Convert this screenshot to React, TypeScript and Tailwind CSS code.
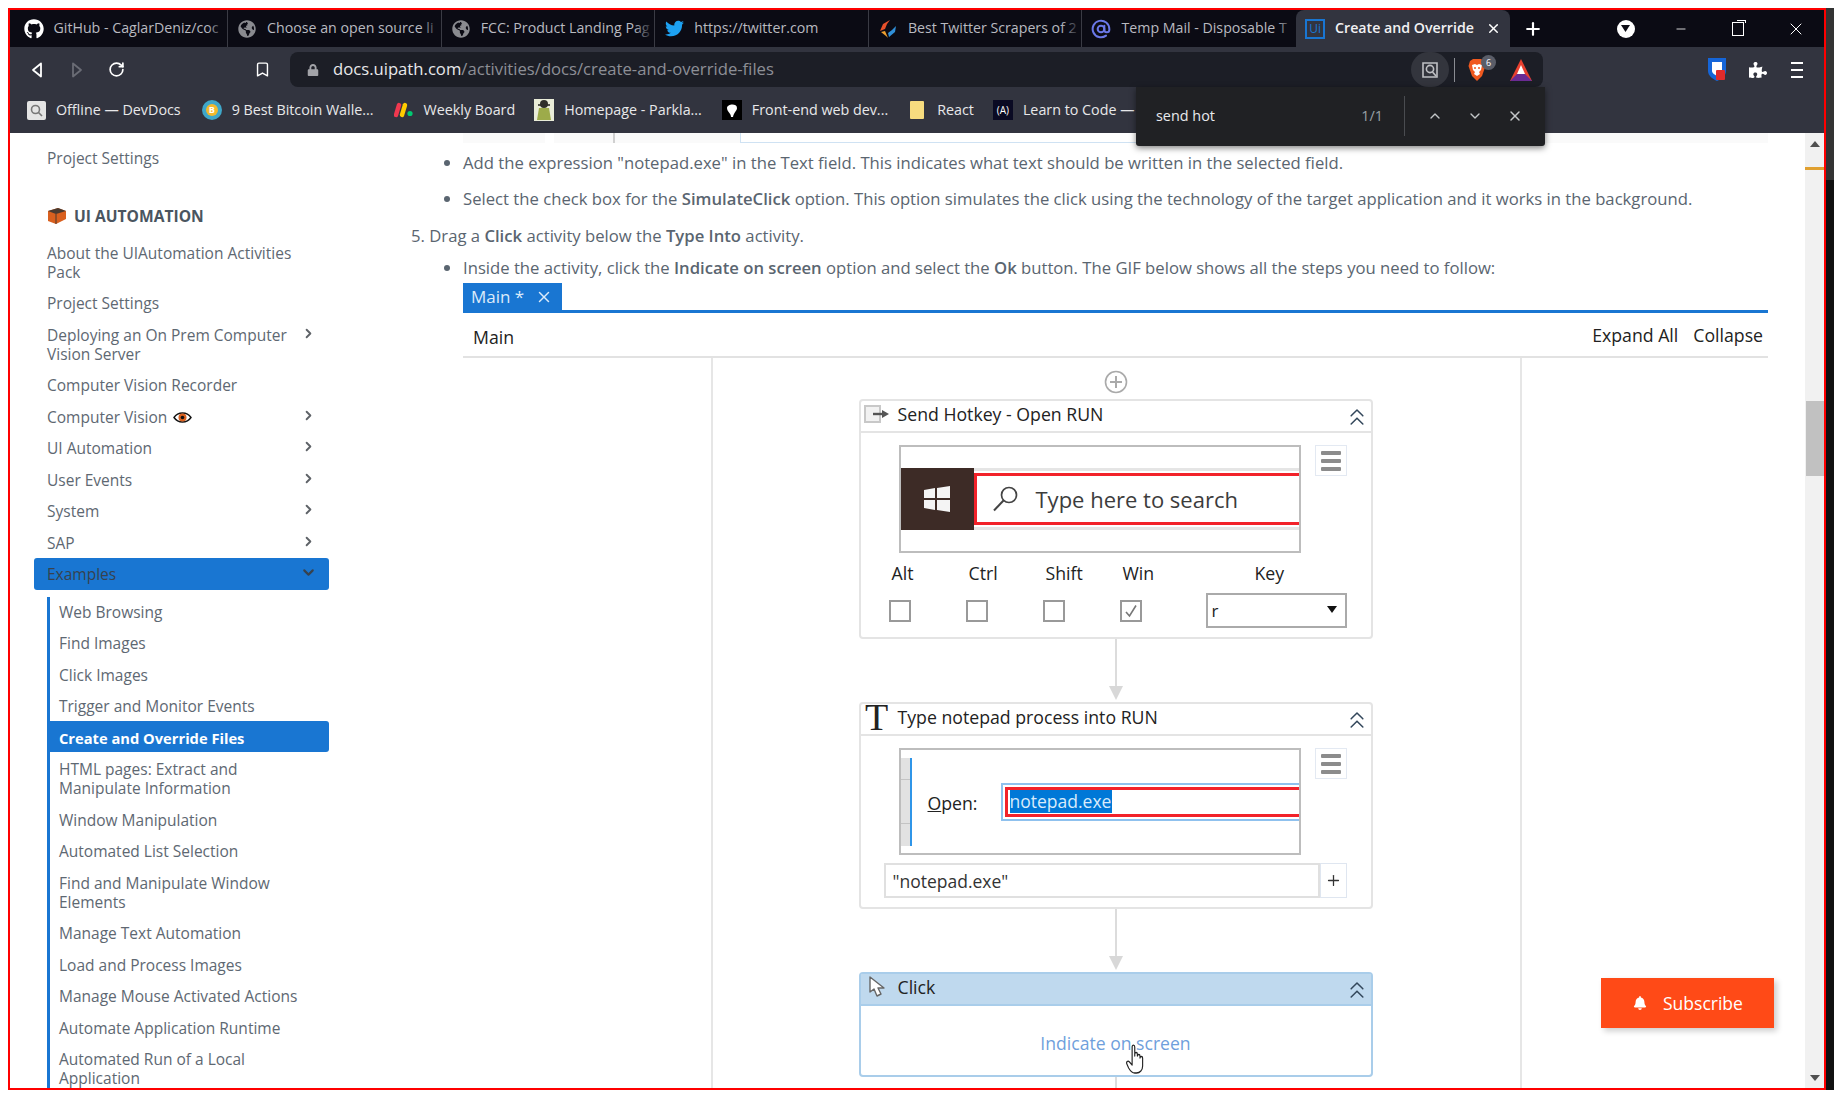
import React from 'react';
import { FaGithub, FaTwitter, FaGlobeAmericas, FaPuzzlePiece, FaLock, FaBell } from 'react-icons/fa';
import { AtSign, Bookmark, RotateCw, ChevronRight, ChevronDown, ChevronUp, ChevronsUp, X, Plus, Minus } from 'lucide-react';

const uiFont = "font-['Open_Sans',sans-serif]";

const Tab = ({ icon, title, last }: { icon: React.ReactNode; title: string; last?: boolean }) => (
  <div className={`w-[213.6px] h-full flex items-center relative ${last ? '' : 'border-r border-[#3a3b44]'}`}>
    <div className="w-[20px] h-[20px] ml-[9px] flex items-center justify-center shrink-0">{icon}</div>
    <span className="ml-[10px] pb-[2px] w-[170px] overflow-hidden whitespace-nowrap text-[14.2px] text-[#b9bac0]">{title}</span>
    <div className="absolute right-0 top-0 bottom-0 w-[20px] bg-gradient-to-r from-transparent to-[#0b0b14]" />
  </div>
);

const Mark = ({ icon, label, gap }: { icon: React.ReactNode; label: string; gap: string }) => (
  <div className={`flex items-center shrink-0 ${gap}`}>
    <div className="w-[20px] h-[20px] flex items-center justify-center shrink-0">{icon}</div>
    <span className="ml-[10px] text-[14.3px] text-[#e8e8ea] whitespace-nowrap">{label}</span>
  </div>
);

const SideItem = ({ label, arrow, extra }: { label: string; arrow?: boolean; extra?: React.ReactNode }) => (
  <div className="flex items-start justify-between px-[13px] py-[6.25px] leading-[19px]">
    <span className="w-[245px] flex items-center gap-[5px]">{label}{extra}</span>
    {arrow && <ChevronRight size={15} strokeWidth={3} className="text-[#5f6368] shrink-0" />}
  </div>
);

const SubItem = ({ label }: { label: string }) => (
  <div className="px-[9px] py-[6.25px] leading-[19px] w-[262px]">{label}</div>
);

const Connector = ({ h }: { h: string }) => (
  <div className={`flex flex-col items-center pb-[2px] ${h}`}>
    <div className="w-[2px] flex-1 bg-[#dcdcdc]" />
    <svg width="14" height="14" viewBox="0 0 14 14" className="shrink-0"><polygon points="0,0 14,0 7,14" fill="#d8d8d8" /></svg>
  </div>
);

const MenuBtn = () => (
  <div className="w-[32px] h-[31px] border border-[#e3e9f2] flex flex-col justify-center gap-[4px] px-[5px]">
    <div className="h-[4px] bg-[#8c8c8c] rounded-[1px]" />
    <div className="h-[4px] bg-[#8c8c8c] rounded-[1px]" />
    <div className="h-[4px] bg-[#8c8c8c] rounded-[1px]" />
  </div>
);

const CardHead = ({ icon, title, active }: { icon: React.ReactNode; title: string; active?: boolean }) => (
  <div className={`h-[32px] pb-[4px] flex items-center border-b-2 shrink-0 ${active ? 'bg-[#bfd9ee] border-[#a9cdea]' : 'border-[#e4e4e4]'}`}>
    <div className="w-[37px] pr-[5px] flex justify-center shrink-0">{icon}</div>
    <span className="text-[17.7px] text-[#222]">{title}</span>
    <ChevronsUp size={28} strokeWidth={1.3} className="ml-auto mt-[6px] text-[#33475b]" />
  </div>
);

const CheckCol = ({ label, checked }: { label: string; checked?: boolean }) => (
  <div className="w-[77px] flex flex-col">
    <span className="h-[24px] leading-[24px] pl-[3px] text-[17.7px] text-[#222]">{label}</span>
    <div className="mt-[15px] w-[22px] h-[22px] border-2 border-[#999] flex items-center justify-center">
      {checked && (
        <svg width="14" height="14" viewBox="0 0 14 14"><path d="M2 8 L5.5 12 L12 1.5" fill="none" stroke="#777" strokeWidth="1.6" /></svg>
      )}
    </div>
  </div>
);

export default function App() {
  return (
    <div className={`w-[1834px] h-[1098px] bg-white pt-2 pl-2 flex overflow-hidden ${uiFont}`}>
      <div className="w-[1818px] h-[1082px] border-2 border-[#f00] flex flex-col relative overflow-hidden shrink-0">
        {/* tab strip */}
        <div className="h-[37px] bg-[#0b0b14] flex items-stretch pl-[4.5px] shrink-0">
          <Tab icon={<FaGithub size={20} className="text-white" />} title="GitHub - CaglarDeniz/coc" />
          <Tab icon={<FaGlobeAmericas size={18} className="text-[#8a8b90]" />} title="Choose an open source li" />
          <Tab icon={<FaGlobeAmericas size={18} className="text-[#8a8b90]" />} title="FCC: Product Landing Pag" />
          <Tab icon={<FaTwitter size={19} className="text-[#1da1f2]" />} title="https://twitter.com" />
          <Tab
            icon={
              <svg width="20" height="20" viewBox="0 0 20 20">
                <path d="M12 1 L5 5 L2 12 L7 10 L9 5 Z" fill="#e8502a" />
                <path d="M18 7 L17 13 L11 18 L10 14 L14 11 Z" fill="#2f8fd8" />
                <path d="M3 13 L8 17 L10 19 L7 12 Z" fill="#f0a030" />
              </svg>
            }
            title="Best Twitter Scrapers of 2"
          />
          <Tab icon={<AtSign size={20} strokeWidth={2.4} className="text-[#6a78e8]" />} title="Temp Mail - Disposable T" last />
          <div className="w-[213.6px] h-full bg-[#32343f] rounded-t-[8px] flex items-center relative">
            <div className="w-[20px] h-[20px] ml-[9px] border-2 border-[#1976d2] flex items-center justify-center text-[12px] text-[#1976d2] leading-none shrink-0">Ui</div>
            <span className="ml-[10px] pb-[2px] w-[148px] overflow-hidden whitespace-nowrap text-[14.2px] font-semibold text-[#f1f1f3]">Create and Override</span>
            <X size={15} strokeWidth={2.4} className="ml-[3px] text-white" />
          </div>
          <Plus size={20} strokeWidth={2.6} className="text-white self-center ml-[13px]" />
          <div className="w-[18px] h-[18px] rounded-full bg-white self-center ml-[74px] flex items-center justify-center">
            <svg width="9" height="7" viewBox="0 0 9 7"><polygon points="0,0 9,0 4.5,7" fill="#0b0b14" /></svg>
          </div>
          <Minus size={14} strokeWidth={1.4} className="text-white self-center ml-[39px]" />
          <div className="self-center ml-[44px] w-[12px] h-[14px] border border-white relative">
            <div className="absolute -top-[3px] -right-[3px] w-[9px] h-[3px] border-t border-r border-white" />
          </div>
          <X size={20} strokeWidth={1.2} className="text-white self-center ml-[42px]" />
        </div>

        {/* toolbar */}
        <div className="h-[43px] bg-[#32343f] flex items-start shrink-0 relative">
          <div className="flex items-center h-[35px] mt-[5px]">
            <svg width="12" height="16" viewBox="0 0 12 16" className="ml-[21px]"><path d="M10 1.5 L2 8 L10 14.5 Z" fill="none" stroke="#fff" strokeWidth="1.8" strokeLinejoin="round" /></svg>
            <svg width="12" height="16" viewBox="0 0 12 16" className="ml-[28px]"><path d="M2 1.5 L10 8 L2 14.5 Z" fill="none" stroke="#6a6c75" strokeWidth="1.8" strokeLinejoin="round" /></svg>
            <RotateCw size={17} strokeWidth={2.4} className="ml-[25px] text-white" />
            <Bookmark size={17} strokeWidth={2} className="ml-[129px] text-white" />
          </div>
          <div className="ml-[19px] mt-[5px] w-[1253px] h-[35px] bg-[#1c1e26] rounded-[8px] flex items-center">
            <FaLock size={12} className="ml-[17px] text-[#a2a3a8]" />
            <span className="ml-[14px] text-[16.66px] text-[#e8e8ea] whitespace-nowrap">docs.uipath.com<span className="text-[#8d8f96]">/activities/docs/create-and-override-files</span></span>
            <div className="ml-auto w-[38px] h-[35px] rounded-full bg-[#33353d] flex items-center justify-center">
              <svg width="18" height="20" viewBox="0 0 18 20" fill="none" stroke="#bfc0c4" strokeWidth="1.6">
                <path d="M2 3 H16 V17 H2 Z" /><circle cx="9" cy="9" r="3.6" /><path d="M11.5 12 L15 16" />
              </svg>
            </div>
            <div className="w-px h-[24px] bg-[#8a8c92] ml-[5px]" />
            <div className="relative ml-[13px] w-[18px] h-[24px]">
              <svg width="18" height="24" viewBox="0 0 18 24">
                <path d="M2 3 L5 1 H13 L16 3 L17.5 8 L14 18 L9 23 L4 18 L0.5 8 Z" fill="#f0591f" />
                <path d="M4 7 L7 6 L9 7 L11 6 L14 7 L13 12 L11 14 L12 16 L9 18 L6 16 L7 14 L5 12 Z" fill="#fff" />
                <path d="M6 10 H8 M10 10 H12" stroke="#f0591f" strokeWidth="1.4" />
              </svg>
              <div className="absolute -top-[3px] left-[13px] w-[15px] h-[15px] rounded-full bg-[#5a5d68] text-[9px] leading-[15px] text-center text-white">6</div>
            </div>
            <svg width="22" height="22" viewBox="0 0 22 22" className="ml-[24px] mr-[11px]">
              <polygon points="11,0 22,22 0,22" fill="#e8402f" />
              <polygon points="0,22 7,15 15,15 22,22" fill="#6a2b93" />
              <polygon points="11,6 15,15 7,15" fill="#fff" />
            </svg>
          </div>
          <div className="flex items-center h-[35px] mt-[5px]">
            <svg width="20" height="25" viewBox="0 0 20 25" className="ml-[164px]">
              <path d="M1 1 H19 V14 C19 19 14 22 10 24 C6 22 1 19 1 14 Z" fill="#1565d8" />
              <path d="M5 5 H15 V14 C15 16 12 18 10 19 C8 18 5 16 5 14 Z" fill="#fff" />
              <rect x="9" y="13" width="9" height="10" rx="1" fill="#e02b2b" />
            </svg>
            <FaPuzzlePiece size={18} className="ml-[22px] text-white" />
            <div className="ml-[24px] w-[12px] flex flex-col gap-[5px]">
              <div className="h-[2px] bg-white" /><div className="h-[2px] bg-white" /><div className="h-[2px] bg-white" />
            </div>
          </div>
        </div>

        {/* bookmarks */}
        <div className="h-[43px] bg-[#32343f] flex items-center pl-[16px] pb-[3px] shrink-0 overflow-hidden">
          <Mark
            gap=""
            label="Offline — DevDocs"
            icon={
              <div className="w-[19px] h-[19px] bg-[#e4e4e4] rounded-[2px] flex items-center justify-center">
                <svg width="13" height="13" viewBox="0 0 13 13" fill="none" stroke="#777" strokeWidth="1.6"><circle cx="5.5" cy="5.5" r="4" /><path d="M8.5 8.5 L12 12" /></svg>
              </div>
            }
          />
          <Mark
            gap="ml-[21px]"
            label="9 Best Bitcoin Walle..."
            icon={
              <div className="w-[20px] h-[20px] rounded-full bg-[#3fa7c9] flex items-center justify-center">
                <div className="w-[12px] h-[12px] rounded-full bg-[#f2b92c] text-[9px] leading-[12px] text-center text-white font-bold">B</div>
              </div>
            }
          />
          <Mark
            gap="ml-[20px]"
            label="Weekly Board"
            icon={
              <svg width="20" height="16" viewBox="0 0 20 16">
                <path d="M5 3 L2 13" stroke="#f0384f" strokeWidth="4.4" strokeLinecap="round" />
                <path d="M11 3 L8 13" stroke="#ffcb00" strokeWidth="4.4" strokeLinecap="round" />
                <circle cx="16" cy="11.5" r="2.6" fill="#00ca72" />
              </svg>
            }
          />
          <Mark
            gap="ml-[19px]"
            label="Homepage - Parkla..."
            icon={
              <svg width="20" height="22" viewBox="0 0 20 22">
                <rect width="20" height="22" fill="#e9ecd8" />
                <circle cx="10" cy="5" r="4" fill="#2f2f2a" />
                <path d="M5 9 L15 9 L17 21 L3 21 Z" fill="#9dab4a" />
                <path d="M4 6 H16" stroke="#2f2f2a" strokeWidth="1.6" />
              </svg>
            }
          />
          <Mark
            gap="ml-[20px]"
            label="Front-end web dev..."
            icon={
              <div className="w-[20px] h-[20px] bg-black flex items-center justify-center">
                <svg width="12" height="15" viewBox="0 0 12 15"><path d="M1 5 C1 1 11 0 11 5 C11 8 8 9 7 14 L5 14 C5 10 1 9 1 5 Z" fill="#fff" /></svg>
              </div>
            }
          />
          <Mark gap="ml-[19px]" label="React" icon={<div className="w-[14px] h-[18px] bg-[#f7dc7f] rounded-[1px]" />} />
          <Mark
            gap="ml-[19px]"
            label="Learn to Code —"
            icon={<div className="w-[20px] h-[20px] bg-[#0a0a23] text-[10px] leading-[20px] text-center text-white">(A)</div>}
          />
        </div>

        {/* page */}
        <div className="flex-1 flex min-h-0 bg-white">
          <aside className="w-[390px] pl-6 pt-[9.25px] shrink-0 overflow-hidden text-[15.5px] text-[#5e6872]">
            <div className="w-[295px]">
              <SideItem label="Project Settings" />
              <div className="mt-[30.5px] mb-[9.25px] h-[24px] flex items-center pl-[13px] gap-[7px] font-bold text-[15.6px] text-[#4a5560]">
                <svg width="20" height="18" viewBox="0 0 20 18">
                  <path d="M1 4 L11 1 L19 4 L19 12 L9 17 L1 14 Z" fill="#d9601f" />
                  <path d="M1 4 L11 1 L19 4 L9 7 Z" fill="#4a3a30" />
                  <path d="M9 7 V17" stroke="#4a3a30" strokeWidth="1" />
                </svg>
                UI AUTOMATION
              </div>
              <SideItem label="About the UIAutomation Activities Pack" />
              <SideItem label="Project Settings" />
              <SideItem label="Deploying an On Prem Computer Vision Server" arrow />
              <SideItem label="Computer Vision Recorder" />
              <SideItem
                label="Computer Vision"
                arrow
                extra={
                  <svg width="19" height="13" viewBox="0 0 19 13" className="ml-[1px]">
                    <path d="M1 6.5 C5 0.5 14 0.5 18 6.5 C14 12.5 5 12.5 1 6.5 Z" fill="#fff" stroke="#111" strokeWidth="1.4" />
                    <circle cx="9.5" cy="6.5" r="4" fill="#d9601f" />
                    <circle cx="9.5" cy="6.5" r="1.8" fill="#111" />
                  </svg>
                }
              />
              <SideItem label="UI Automation" arrow />
              <SideItem label="User Events" arrow />
              <SideItem label="System" arrow />
              <SideItem label="SAP" arrow />
              <div className="flex items-start justify-between -mt-[1px] mb-[1px] h-[31.5px] px-[13px] pt-[7.25px] leading-[19px] bg-[#1976d2] rounded-[3px] text-[#37424e]">
                <span>Examples</span>
                <ChevronDown size={17} strokeWidth={3} className="text-[#37424e] -mt-[1px] -mr-[1px]" />
              </div>
              <div className="mt-[7px] ml-[13px] border-l-[3px] border-[#1976d2]">
                <SubItem label="Web Browsing" />
                <SubItem label="Find Images" />
                <SubItem label="Click Images" />
                <SubItem label="Trigger and Monitor Events" />
                <div className="-ml-[3px] -mt-[2px] mb-[2px] h-[31.5px] pl-[12px] pt-[8.25px] leading-[19px] bg-[#1976d2] rounded-r-[3px] text-white text-[14.7px] font-bold">Create and Override Files</div>
                <SubItem label="HTML pages: Extract and Manipulate Information" />
                <SubItem label="Window Manipulation" />
                <SubItem label="Automated List Selection" />
                <SubItem label="Find and Manipulate Window Elements" />
                <SubItem label="Manage Text Automation" />
                <SubItem label="Load and Process Images" />
                <SubItem label="Manage Mouse Activated Actions" />
                <SubItem label="Automate Application Runtime" />
                <SubItem label="Automated Run of a Local Application" />
              </div>
            </div>
          </aside>

          <main className="flex-1 min-w-0 overflow-hidden text-[16.68px] leading-[24px] text-[#5a6570]">
            {/* bottom edge of the previous gif */}
            <div className="h-[10px] ml-[63px] w-[1305px] flex">
              <div className="w-[82px] bg-[#fafafa]" />
              <div className="w-[59px] ml-[9px] bg-[#fafafa]" />
              <div className="w-[2px] bg-[#d0d0d0]" />
              <div className="w-[125px] bg-[#fafafa]" />
              <div className="w-[400px] border-l border-b border-[#cfe2f3]" />
              <div className="flex-1 bg-[#fafafa]" />
            </div>
            <ul className="list-disc ml-[63px] mt-[8px]">
              <li>Add the expression "notepad.exe" in the Text field. This indicates what text should be written in the selected field.</li>
              <li className="mt-[12px]">Select the check box for the <b className="font-semibold">SimulateClick</b> option. This option simulates the click using the technology of the target application and it works in the background.</li>
            </ul>
            <p className="ml-[11px] mt-[13px]">5. Drag a <b className="font-semibold">Click</b> activity below the <b className="font-semibold">Type Into</b> activity.</p>
            <ul className="list-disc ml-[63px] mt-[8px]">
              <li>Inside the activity, click the <b className="font-semibold">Indicate on screen</b> option and select the <b className="font-semibold">Ok</b> button. The GIF below shows all the steps you need to follow:</li>
            </ul>

            {/* gif frame */}
            <div className="ml-[63px] mt-[3px] w-[1305px] h-[805px] flex flex-col overflow-hidden text-[#222]">
              <div className="h-[27px] shrink-0">
                <div className="w-[99px] h-full bg-[#1976d2] text-[#dcebfa] text-[17px] leading-[27px] pl-[8px] flex items-center gap-[11px]">
                  Main *
                  <X size={18} strokeWidth={2} />
                </div>
              </div>
              <div className="h-[3px] bg-[#1976d2] shrink-0" />
              <div className="h-[45px] border-b-2 border-[#e2e2e2] flex items-center shrink-0 text-[17.7px] pr-[5px]">
                <span className="ml-[10px] mt-[4px]">Main</span>
                <span className="ml-auto">Expand All</span>
                <span className="ml-[15px]">Collapse</span>
              </div>
              <div className="flex-1 flex min-h-0">
                <div className="w-[248px] shrink-0" />
                <div className="w-[811px] border-x-2 border-[#e6e6e6] flex flex-col items-center pt-[12px] pr-[2px] shrink-0">
                  <svg width="24" height="24" viewBox="0 0 24 24" className="shrink-0" fill="none" stroke="#aaa" strokeWidth="1.6">
                    <circle cx="12" cy="12" r="10.5" /><path d="M12 6 V18 M6 12 H18" strokeWidth="2" />
                  </svg>
                  {/* Send Hotkey */}
                  <div className="mt-[5px] w-[514px] h-[240px] border-2 border-[#e4e4e4] rounded-[4px] flex flex-col shrink-0">
                    <CardHead
                      title="Send Hotkey - Open RUN"
                      icon={
                        <svg width="26" height="20" viewBox="0 0 26 20">
                          <rect x="1" y="2" width="15" height="16" fill="#f2f2f2" stroke="#c8c8c8" strokeWidth="2" />
                          <path d="M9 10 H20" stroke="#555" strokeWidth="2.4" /><polygon points="18,6 25,10 18,14" fill="#555" />
                        </svg>
                      }
                    />
                    <div className="mt-[12px] ml-[38px] flex gap-[14px]">
                      <div className="w-[402px] h-[108px] border-2 border-[#bdbdbd] pt-[21px] overflow-hidden shrink-0">
                        <div className="flex h-[62px]">
                          <div className="w-[73px] bg-[#3d2b26] flex items-center justify-center shrink-0">
                            <svg width="26" height="26" viewBox="0 0 26 26"><path d="M0 4 L11 2 V12 H0 Z M13 2 L26 0 V12 H13 Z M0 14 H11 V24 L0 22 Z M13 14 H26 V26 L13 24 Z" fill="#f4f4f4" /></svg>
                          </div>
                          <div className="flex-1 border-y-[3px] border-[#e5e5e5] py-[2px] min-w-0">
                            <div className="h-full border-y-[3px] border-l-[3px] border-[#f2222a] flex items-center">
                              <svg width="28" height="28" viewBox="0 0 28 28" fill="none" stroke="#444" strokeWidth="1.7" className="ml-[15px]"><circle cx="17" cy="10" r="7.5" /><path d="M11.5 15.5 L2 25.5" strokeWidth="2" /></svg>
                              <span className="ml-[16px] text-[22px] leading-none text-[#3c3c3c] whitespace-nowrap">Type here to search</span>
                            </div>
                          </div>
                        </div>
                      </div>
                      <MenuBtn />
                    </div>
                    <div className="mt-[8px] ml-[28px] flex">
                      <CheckCol label="Alt" />
                      <CheckCol label="Ctrl" />
                      <CheckCol label="Shift" />
                      <CheckCol label="Win" checked />
                      <div className="ml-[9px] w-[141px] flex flex-col">
                        <span className="h-[24px] leading-[24px] pl-[49px] text-[17.7px]">Key</span>
                        <div className="mt-[8px] h-[35px] border-2 border-[#aaa] flex items-center justify-between pl-[4px] pr-[8px] text-[17px]">
                          r
                          <svg width="10" height="7" viewBox="0 0 10 7" className="mb-[3px]"><polygon points="0,0 10,0 5,7" fill="#111" /></svg>
                        </div>
                      </div>
                    </div>
                  </div>
                  <Connector h="h-[63px] shrink-0" />
                  {/* Type Into */}
                  <div className="w-[514px] h-[207px] border-2 border-[#e4e4e4] rounded-[4px] flex flex-col shrink-0">
                    <CardHead
                      title="Type notepad process into RUN"
                      icon={<span className="text-[38px] leading-none font-['Liberation_Serif',serif] text-[#222]">T</span>}
                    />
                    <div className="mt-[12px] ml-[38px] flex gap-[14px]">
                      <div className="w-[402px] h-[107px] border-2 border-[#bdbdbd] flex items-center shrink-0 overflow-hidden">
                        <div className="w-[11px] h-[88px] bg-[#e2e2e2] border-r-2 border-[#2f95e8] shrink-0 flex flex-col justify-around">
                          <div className="h-px bg-[#c4c4c4]" /><div className="h-px bg-[#c4c4c4]" />
                        </div>
                        <span className="ml-[16px] w-[73px] text-[17.7px] text-[#222] shrink-0 mt-[2px]"><span className="underline">O</span>pen:</span>
                        <div className="flex-1 h-[38px] border-y-2 border-l-2 border-[#8fc1ee] py-[2px] pl-[2px]">
                          <div className="h-full border-y-[3px] border-l-[3px] border-[#f2222a] flex items-center pl-[2px]">
                            <span className="w-[102px] h-[23px] bg-[#0078d7] text-[#d8ebfb] text-[17.5px] leading-[23px] overflow-hidden whitespace-nowrap">notepad.exe</span>
                          </div>
                        </div>
                      </div>
                      <MenuBtn />
                    </div>
                    <div className="mt-[8px] ml-[23px] flex">
                      <div className="w-[436px] h-[35px] border-2 border-[#e0e0e0] flex items-center pl-[7px] text-[17.5px] text-[#333]">"notepad.exe"</div>
                      <div className="w-[27px] h-[35px] border border-[#dfe6f0] flex items-center justify-center">
                        <Plus size={17} strokeWidth={1.8} className="text-[#333]" />
                      </div>
                    </div>
                  </div>
                  <Connector h="h-[63px] shrink-0" />
                  {/* Click */}
                  <div className="w-[514px] h-[105px] border-2 border-[#a9cdea] rounded-[4px] flex flex-col shrink-0">
                    <CardHead
                      active
                      title="Click"
                      icon={
                        <svg width="18" height="22" viewBox="0 0 18 22"><path d="M2 1 L2 16 L6 13 L9 20 L13 18 L10 12 L16 12 Z" fill="#fff" stroke="#666" strokeWidth="1.4" strokeLinejoin="round" /></svg>
                      }
                    />
                    <div className="flex-1 flex items-center justify-center text-[17.6px] text-[#6f9fdc] relative pt-[4px]">
                      Indicate on screen
                      <svg width="21" height="30" viewBox="0 0 24 30" preserveAspectRatio="none" className="absolute left-[265.5px] top-[38px]" fill="#fff" stroke="#222" strokeWidth="1.3" strokeLinejoin="round">
                        <path d="M7 15 V3 C7 0.5 10 0.5 10 3 V12 V10 C10 8 13 8 13 10 V12 C13 10 16 10 16 12 V14 C16 12 19 12 19 14 V22 C19 26 16 29 12 29 H10 C7 29 5 27 3 24 L1 20 C0 18 2 16 4 18 L7 21 Z" />
                      </svg>
                    </div>
                  </div>
                  <div className="w-[2px] h-[11px] bg-[#dcdcdc] shrink-0" />
                </div>
              </div>
            </div>
          </main>

          {/* scrollbar */}
          <div className="w-[19px] bg-[#f1f1f1] flex flex-col items-center shrink-0 relative">
            <svg width="10" height="6" viewBox="0 0 10 6" className="mt-[8px]"><polygon points="5,0 10,6 0,6" fill="#505050" /></svg>
            <div className="w-full h-[3px] mt-[20px] bg-[#e0a030]" />
            <div className="w-[18px] ml-[1px] h-[75px] mt-[231px] bg-[#c1c1c1]" />
            <svg width="10" height="6" viewBox="0 0 10 6" className="mt-auto mb-[7px]"><polygon points="0,0 10,0 5,6" fill="#505050" /></svg>
          </div>
        </div>

        {/* find in page */}
        <div className="absolute left-[1126px] top-[77px] w-[409px] h-[59px] bg-[#202124] shadow-[0_2px_6px_rgba(0,0,0,0.5)] rounded-b-[3px] flex items-center text-[14.4px] pb-[2px]">
          <span className="ml-[20px] text-[#e8eaed]">send hot</span>
          <span className="ml-auto text-[#9aa0a6]">1/1</span>
          <div className="ml-[21px] w-px h-[40px] bg-[#4a4c50]" />
          <ChevronUp size={16} strokeWidth={2} className="ml-[22px] text-[#c4c7c9]" />
          <ChevronDown size={16} strokeWidth={2} className="ml-[24px] text-[#c4c7c9]" />
          <X size={16} strokeWidth={2.2} className="ml-[24px] mr-[22px] text-[#c4c7c9]" />
        </div>

        {/* subscribe */}
        <div className="absolute left-[1591px] top-[968px] w-[173px] h-[50px] bg-[#ff4a17] shadow-[3px_3px_6px_rgba(0,0,0,0.2)] flex items-center text-white text-[17.5px] pl-[32px]">
          <FaBell size={14} />
          <span className="ml-[16px]">Subscribe</span>
        </div>
      </div>
      <div className="w-2 h-[1082px] flex flex-col shrink-0">
        <div className="h-[172px] bg-[#333]" />
        <div className="flex-1 bg-[#111]" />
      </div>
    </div>
  );
}
